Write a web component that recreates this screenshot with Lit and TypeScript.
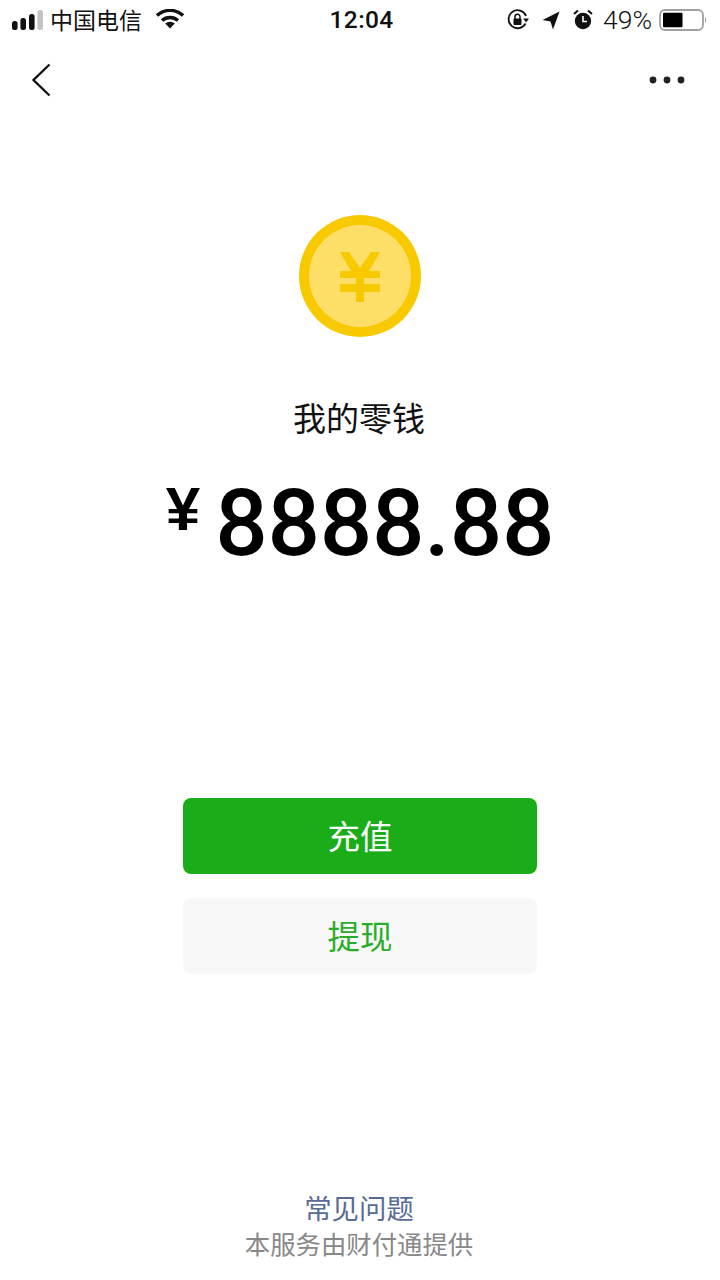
import { LitElement, html, css } from "lit";
import { customElement } from "lit/decorators.js";

@customElement("app-root")
export class AppRoot extends LitElement {
  static styles = css`
    :host { display: block; width: 720px; height: 1280px; background: #fff; font-family: "Noto Sans CJK SC", "Liberation Sans", sans-serif; color: #000; overflow: hidden; }
    .page { display: flex; flex-direction: column; height: 1280px; }
    .status { height: 40px; display: flex; align-items: center; padding: 0 0 0 12px; box-sizing: border-box; color: #111; }
    .left, .right { flex: 1; display: flex; align-items: center; }
    .left { gap: 8px; }
    .right { justify-content: flex-end; padding-right: 12px; }
    .carrier { font-size: 23px; line-height: 40px; width: 92px; white-space: nowrap; font-weight: 400; margin-left: -1px; padding-bottom: 2px; }
    .wifi { margin-left: 6px; margin-top: -2px; }
    .time { font-family: Roboto, sans-serif; font-size: 24.5px; font-weight: 500; letter-spacing: 0.4px; width: 64px; text-align: center; margin-left: -2px; margin-right: -5px; padding-bottom: 2px; white-space: nowrap; }
    .pct { font-family: Roboto, sans-serif; font-size: 26.5px; margin: 0 7px 0 10px; font-weight: 300; padding-bottom: 1px; }
    .sicon { display: block; }
    .gap { margin-left: 13px; }
    .gap2 { margin-left: 13px; }
    .nav { height: 80px; display: flex; align-items: center; justify-content: space-between; padding: 0 35px 0 31px; }
    .main { display: flex; flex-direction: column; align-items: center; padding-top: 95px; }
    .title { font-size: 33px; line-height: 46px; margin-top: 57px; font-weight: 400; color: #111; padding-right: 2px; }
    .amount { display: flex; align-items: flex-start; margin-top: 29px; height: 110px; }
    .yen { font-family: "Liberation Sans", sans-serif; font-weight: 700; font-size: 62px; line-height: 62px; margin-top: 9px; margin-right: 15px; }
    .num { font-family: Roboto, sans-serif; font-size: 92.5px; line-height: 110px; font-weight: 500; letter-spacing: -0.3px; }
    .btn { width: 354px; height: 76px; box-sizing: border-box; padding-bottom: 3px; border-radius: 8px; display: flex; align-items: center; justify-content: center; font-size: 32.5px; }
    .primary { background: #1aad19; color: #fff; margin-top: 219px; }
    .secondary { background: #f8f8f8; color: #2aad2a; margin-top: 24px; }
    .footer { margin-top: auto; display: flex; flex-direction: column; align-items: center; padding-bottom: 19px; }
    .faq { font-size: 27.4px; line-height: 36px; color: #576b95; padding-right: 2px; }
    .by { font-size: 25.4px; line-height: 36px; color: #888; white-space: nowrap; padding-right: 2px; }
  `;

  render() {
    return html`
      <div class="page">
        <div class="status">
          <div class="left">
            <svg width="31" height="20" viewBox="0 0 31 20" class="sicon">
              <rect x="0" y="11" width="5.6" height="9" rx="2.5" fill="#111"/>
              <rect x="8.4" y="8" width="5.6" height="12" rx="2.5" fill="#111"/>
              <rect x="17" y="4" width="5.6" height="16" rx="2.5" fill="#111"/>
              <rect x="25.4" y="0" width="5.6" height="20" rx="2.5" fill="#c4c4c4"/>
            </svg>
            <span class="carrier">中国电信</span>
            <svg class="wifi" width="28" height="20" viewBox="0 0 28 20">
              <path d="M1 6.5 A19 19 0 0 1 27 6.5" fill="none" stroke="#111" stroke-width="3.4"/>
              <path d="M6 11.5 A12 12 0 0 1 22 11.5" fill="none" stroke="#111" stroke-width="3.4"/>
              <path d="M9.2 14.6 A7 7 0 0 1 18.8 14.6 L14 19.6 Z" fill="#111"/>
            </svg>
          </div>
          <div class="time">12:04</div>
          <div class="right">
            <svg class="sicon" width="22" height="22" viewBox="0 0 22 22">
              <path d="M18.5 14.5 A9 9 0 1 1 19 7" fill="none" stroke="#111" stroke-width="1.8"/>
              <path d="M16.2 9.5 L22 9.5 L19.1 13.5 Z" fill="#111"/>
              <rect x="6.5" y="9.5" width="8" height="6.5" rx="1" fill="#111"/>
              <path d="M8 10 V7.8 A2.5 2.5 0 0 1 13 7.8 V10" fill="none" stroke="#111" stroke-width="1.5"/>
            </svg>
            <svg class="sicon gap" width="18" height="19" viewBox="0 0 18 19">
              <path d="M0.5 9 L17.5 0.5 L11 18.5 L8.5 10.5 Z" fill="#111"/>
            </svg>
            <svg class="sicon gap2" width="20" height="22" viewBox="0 0 20 22">
              <circle cx="10" cy="12" r="8.2" fill="#111"/>
              <path d="M10 7 V12.5 H14" fill="none" stroke="#fff" stroke-width="1.6"/>
              <path d="M1 5 L5 1.5 M19 5 L15 1.5" stroke="#111" stroke-width="2" fill="none"/>
            </svg>
            <span class="pct">49%</span>
            <svg width="49" height="22" viewBox="0 0 49 22" class="sicon">
              <rect x="1" y="1" width="43" height="20" rx="5" fill="none" stroke="#a0a0a0" stroke-width="1.8"/>
              <rect x="4" y="3.8" width="19.5" height="14.4" rx="1" fill="#000"/>
              <path d="M46 8 A4 4 0 0 1 46 14 Z" fill="#a0a0a0"/>
            </svg>
          </div>
        </div>
        <div class="nav">
          <svg width="20" height="34" viewBox="0 0 20 34">
            <path d="M18.5 1.5 L2.5 17 L18.5 32.5" fill="none" stroke="#111" stroke-width="2.4"/>
          </svg>
          <svg width="36" height="8" viewBox="0 0 36 8">
            <circle cx="4" cy="4" r="3.4" fill="#222"/>
            <circle cx="18" cy="4" r="3.4" fill="#222"/>
            <circle cx="32" cy="4" r="3.4" fill="#222"/>
          </svg>
        </div>
        <div class="main">
          <svg width="122" height="122" viewBox="0 0 122 122">
            <circle cx="61" cy="61" r="61" fill="#f9c900"/>
            <circle cx="61" cy="61" r="51" fill="#fddf68"/>
            <path d="M41 37 H50 L61 53 L72 37 H81 L70 56 H81 V63 H65 V69 H81 V77 H65 V87 H57 V77 H41 V69 H57 V63 H41 V56 H52 Z" fill="#f9c900"/>
          </svg>
          <div class="title">我的零钱</div>
          <div class="amount">
            <span class="yen">¥</span>
            <span class="num">8888.88</span>
          </div>
          <div class="btn primary">充值</div>
          <div class="btn secondary">提现</div>
        </div>
        <div class="footer">
          <div class="faq">常见问题</div>
          <div class="by">本服务由财付通提供</div>
        </div>
      </div>
    `;
  }
}
